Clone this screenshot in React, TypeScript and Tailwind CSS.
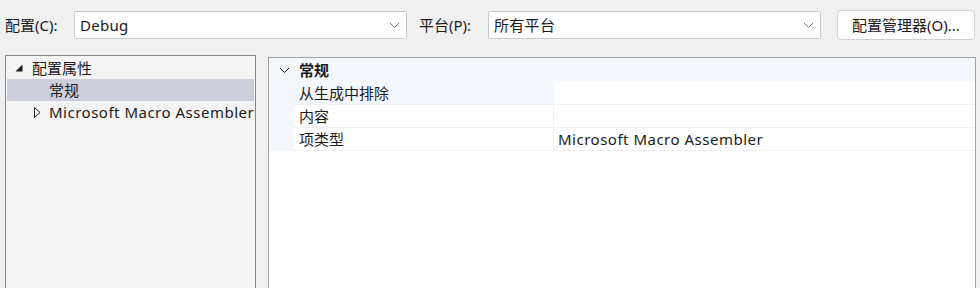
import React from "react";

const font = { fontFamily: '"Noto Sans", "Noto Sans CJK SC", sans-serif' };

function Chevron({ className = "" }: { className?: string }) {
    return (
        <svg width="11" height="7" viewBox="0 0 11 7" className={className}>
            <path d="M1 1 L5.5 5.5 L10 1" fill="none" stroke="currentColor" strokeWidth="1" />
        </svg>
    );
}

function Dropdown({ value, width }: { value: string; width: string }) {
    return (
        <div
            className={`${width} h-[28px] bg-white border border-[#c9c9c9] rounded-[2px] flex items-center justify-between pl-[5px] pr-[6px]`}
        >
            <span className="text-[15px] leading-none text-[#1b1b1b] tracking-[0.3px]">{value}</span>
            <Chevron className="text-[#707070]" />
        </div>
    );
}

export default function App() {
    const rows = [
        { name: "从生成中排除", value: "", active: true },
        { name: "内容", value: "", active: false },
        { name: "项类型", value: "Microsoft Macro Assembler", active: false },
    ];

    return (
        <div className="w-[980px] h-[288px] bg-[#f0f0f0] overflow-hidden text-[#1b1b1b]" style={font}>
            {/* 顶部工具栏 */}
            <div className="flex items-center pt-[10px] h-[40px]">
                <span className="w-[74px] pl-[5px] text-[15px]">配置(C):</span>
                <Dropdown value="Debug" width="w-[333px]" />
                <span className="w-[81px] pl-[12px] text-[15px]">平台(P):</span>
                <Dropdown value="所有平台" width="w-[333px]" />
                <button className="ml-[16px] w-[138px] h-[30px] bg-[#fdfdfd] border border-[#d0d0d0] rounded-[4px] text-[15px] text-[#1b1b1b] flex items-center justify-center">
                    配置管理器(O)...
                </button>
            </div>

            <div className="flex items-start mt-[15px] pl-[5px]">
                {/* 左侧树 */}
                <div className="w-[251px] h-[260px] bg-[#f4f4f4] border border-[#828790] p-[1px] text-[15px] overflow-hidden">
                    <div className="h-[22px] flex items-center">
                        <svg width="8" height="8" viewBox="0 0 8 8" className="ml-[8px] mr-[9px] shrink-0">
                            <path d="M7.5 0.5 L7.5 7.5 L0.5 7.5 Z" fill="#1e1e1e" />
                        </svg>
                        <span>配置属性</span>
                    </div>
                    <div className="h-[22px] flex items-center bg-[#cccedb] pl-[42px]">常规</div>
                    <div className="h-[22px] flex items-center">
                        <svg width="7" height="11" viewBox="0 0 7 11" className="ml-[27px] mr-[8px] shrink-0">
                            <path d="M0.5 0.5 L6 5.5 L0.5 10.5 Z" fill="none" stroke="#1e1e1e" strokeWidth="1" />
                        </svg>
                        <span className="whitespace-nowrap tracking-[0.5px]">Microsoft Macro Assembler</span>
                    </div>
                </div>

                {/* 右侧属性表 */}
                <div className="ml-[12px] mt-[2px] w-[708px] h-[260px] bg-white border border-[#a0a0a0] text-[15px]">
                    <div className="h-[24px] bg-[#f4f7fb] flex items-center">
                        <Chevron className="ml-[10px] mr-[9px] text-[#1e1e1e]" />
                        <span className="font-bold">常规</span>
                    </div>
                    {rows.map((r) => (
                        <div key={r.name} className="flex h-[23px] bg-[#f4f7fb]">
                            <div className="w-[25px]" />
                            <div
                                className={`w-[259px] flex items-center pl-[5px] border-b border-[#f0f0f0] ${
                                    r.active ? "bg-[#f4f7fb]" : "bg-white"
                                }`}
                            >
                                {r.name}
                            </div>
                            <div className="flex-1 flex items-center pl-[4px] bg-white border-l border-b border-[#f0f0f0] whitespace-nowrap tracking-[0.5px]">
                                {r.value}
                            </div>
                        </div>
                    ))}
                </div>
            </div>
        </div>
    );
}
